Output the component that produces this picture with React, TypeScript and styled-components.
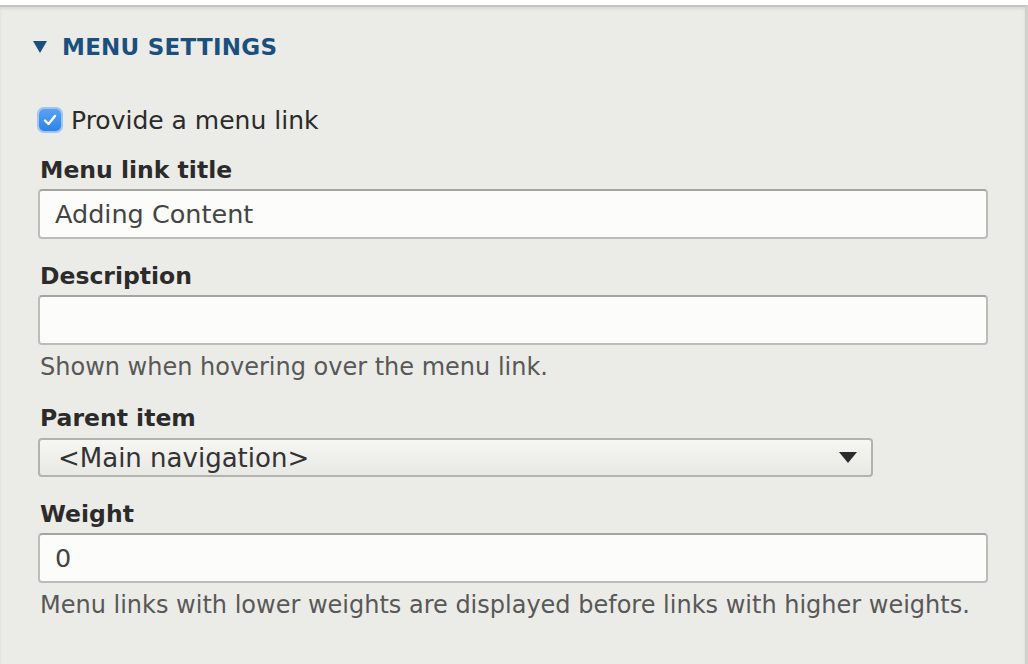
import React from "react";
import styled, { createGlobalStyle } from "styled-components";

const GlobalStyle = createGlobalStyle`
  html, body {
    margin: 0;
    padding: 0;
    background: #ffffff;
  }
  body {
    font-family: "DejaVu Sans", "Liberation Sans", sans-serif;
    color: #333;
  }
`;

const Panel = styled.section`
  margin-top: 5px;
  height: 659px;
  box-sizing: border-box;
  background: #ebebe7;
  border-top: 2px solid #c4c4c0;
  border-right: 3px solid #d0d0cc;
  box-shadow: inset 0 2px 3px rgba(0, 0, 0, 0.08);
  padding: 27px 40px 0 33px;
`;

const Summary = styled.div`
  display: flex;
  align-items: center;
  gap: 15px;
  height: 26px;
  color: #1b4f7e;
  font-weight: bold;
  font-size: 23px;
  letter-spacing: 0.25px;
  text-transform: uppercase;
`;

const Body = styled.div`
  display: flex;
  flex-direction: column;
  padding: 0 0 0 5px;
  margin-top: 47px;
`;

const CheckRow = styled.label`
  display: flex;
  align-items: center;
  gap: 10px;
  font-size: 25px;
  color: #2b2b2b;
  height: 26px;
`;

const CheckBox = styled.span`
  display: inline-flex;
  align-items: center;
  justify-content: center;
  width: 22px;
  height: 22px;
  border-radius: 5px;
  background: linear-gradient(#58a2f3, #2f83e6);
  box-shadow: 0 0 0 2px #9cc5f4;
  margin-left: 1px;
`;

const Field = styled.div`
  display: flex;
  flex-direction: column;
  margin-top: 23px;
`;

const Label = styled.div`
  font-weight: bold;
  font-size: 23.5px;
  color: #2b2b2b;
  line-height: 28px;
  margin: 0 0 5px 2px;
`;

const TextInput = styled.div`
  box-sizing: border-box;
  width: 950px;
  height: 50px;
  background: #fcfcfa;
  border: 2px solid #bcbcb8;
  border-top-color: #a4a4a0;
  border-radius: 4px;
  display: flex;
  align-items: center;
  padding: 0 15px;
  font-size: 25.5px;
  color: #444;
`;

const Select = styled.div`
  box-sizing: border-box;
  width: 835px;
  height: 39px;
  margin-top: 1px;
  background: linear-gradient(#f6f6f3, #e8e8e4);
  border: 2px solid #b2b2ae;
  border-radius: 4px;
  display: flex;
  align-items: center;
  justify-content: space-between;
  padding: 0 14px 0 18px;
  font-size: 26px;
  color: #333;
`;

const Help = styled.div`
  font-size: 24px;
  color: #585858;
  margin: 8px 0 0 2px;
  line-height: 28px;
`;

const Triangle = ({ w, h, color }: { w: number; h: number; color: string }) => (
  <svg width={w} height={h} viewBox={`0 0 ${w} ${h}`}>
    <polygon points={`0,0 ${w},0 ${w / 2},${h}`} fill={color} />
  </svg>
);

export default function App() {
  return (
    <>
      <GlobalStyle />
      <Panel>
        <Summary>
          <Triangle w={14} h={12} color="#1b4f7e" />
          <span>Menu Settings</span>
        </Summary>
        <Body>
          <CheckRow>
            <CheckBox>
              <svg width="14" height="12" viewBox="0 0 14 12">
                <path d="M2 6.5 L5.5 10 L12 2" fill="none" stroke="#fff" strokeWidth="2.4" strokeLinecap="round" strokeLinejoin="round" />
              </svg>
            </CheckBox>
            Provide a menu link
          </CheckRow>
          <Field>
            <Label>Menu link title</Label>
            <TextInput>Adding Content</TextInput>
          </Field>
          <Field>
            <Label>Description</Label>
            <TextInput />
            <Help>Shown when hovering over the menu link.</Help>
          </Field>
          <Field>
            <Label>Parent item</Label>
            <Select>
              <span>&lt;Main navigation&gt;</span>
              <Triangle w={18} h={11} color="#2b2b2b" />
            </Select>
          </Field>
          <Field>
            <Label>Weight</Label>
            <TextInput>0</TextInput>
            <Help>Menu links with lower weights are displayed before links with higher weights.</Help>
          </Field>
        </Body>
      </Panel>
    </>
  );
}
